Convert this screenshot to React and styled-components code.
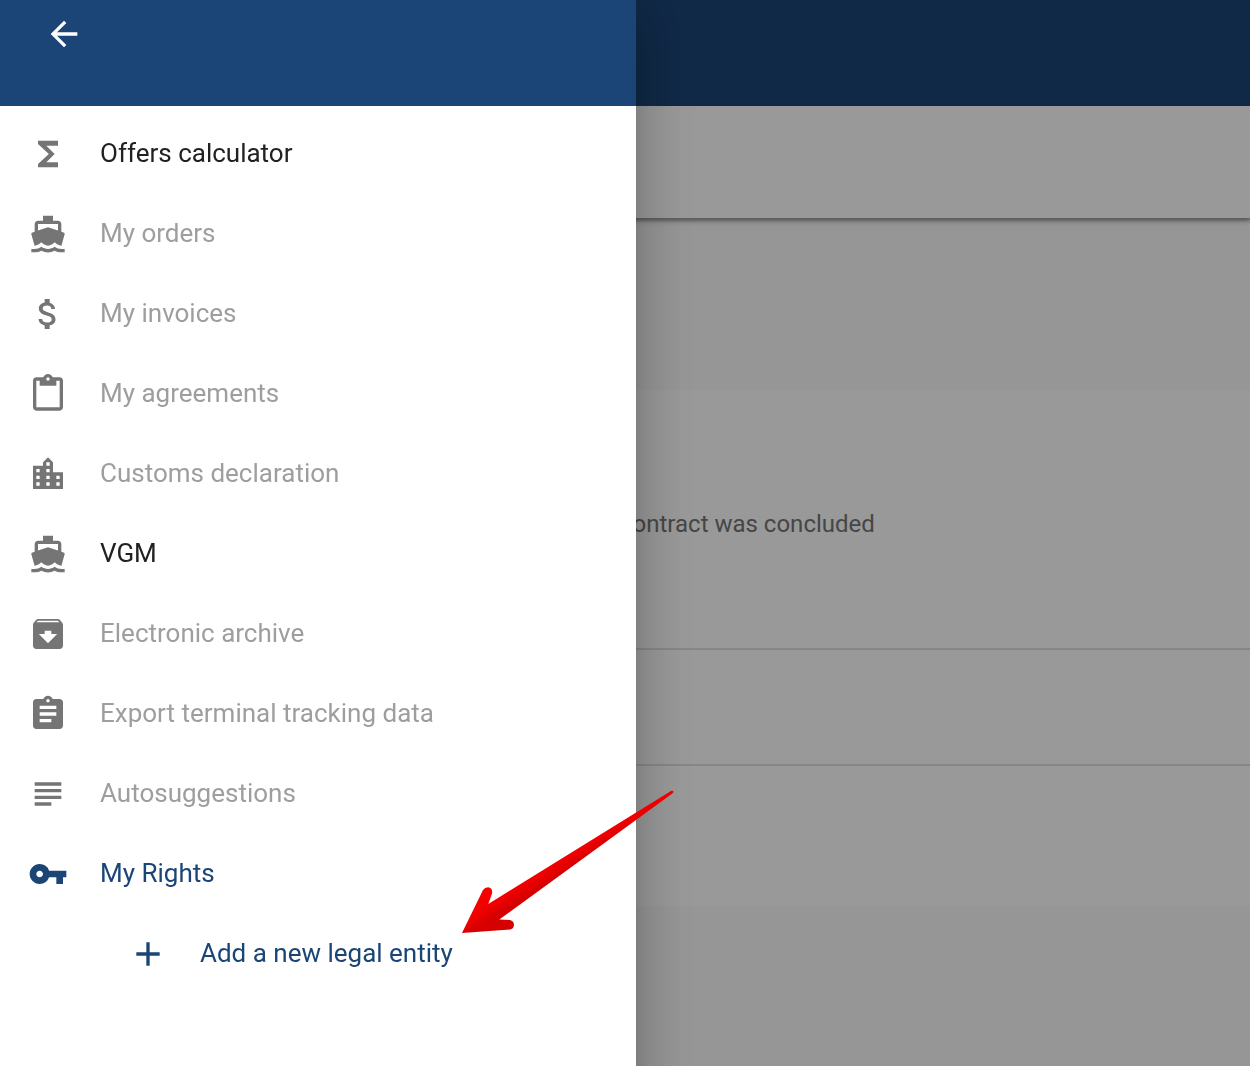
import React from "react";
import styled, { createGlobalStyle, css } from "styled-components";
import {
  MdAdd,
  MdArchive,
  MdArrowBack,
  MdAssignment,
  MdAttachMoney,
  MdContentPaste,
  MdDirectionsBoat,
  MdFunctions,
  MdLocationCity,
  MdSubject,
  MdVpnKey,
} from "react-icons/md";

const colors = {
  primary: "#1b4576",
  text: "#212121",
  disabled: "#9e9e9e",
  icon: "#757575",
  line: "#e0e0e0",
  page: "#fafafa",
};

const GlobalStyle = createGlobalStyle`
  *, *::before, *::after { box-sizing: border-box; }
  body {
    margin: 0;
    background: ${colors.page};
    font-family: Roboto, "Liberation Sans", sans-serif;
    overflow: hidden;
  }
`;

const Page = styled.div`
  display: flex;
  flex-direction: column;
  min-height: 100vh;
`;

const AppBar = styled.header`
  height: 106px;
  background: ${colors.primary};
`;

const Toolbar = styled.div`
  height: 112px;
  background: #fff;
  box-shadow:
    0 3px 2px 0 rgba(0, 0, 0, 0.2),
    0 4px 4px 0 rgba(0, 0, 0, 0.14),
    0 2px 10px 0 rgba(0, 0, 0, 0.12);
  clip-path: inset(0 0 -20px 0);
`;

const Content = styled.main`
  padding-top: 172px;
`;

const Card = styled.section`
  background: #fff;
`;

const CardRow = styled.div`
  height: ${({ $height }) => $height}px;
  border-bottom: ${({ $last }) => ($last ? "0" : `2px solid ${colors.line}`)};
`;

const Note = styled.p`
  margin: 0;
  padding: 118px 0 0 620px;
  color: ${colors.icon};
  font-size: 24px;
  line-height: 32px;
`;

const Scrim = styled.div`
  position: fixed;
  inset: 0;
  background: rgba(0, 0, 0, 0.4);
`;

const Drawer = styled.aside`
  position: fixed;
  inset: 0 auto -64px 0;
  width: 636px;
  max-width: 100%;
  background: #fff;
  box-shadow:
    0 16px 20px -10px rgba(0, 0, 0, 0.2),
    0 16px 48px 4px rgba(0, 0, 0, 0.14),
    0 6px 60px 10px rgba(0, 0, 0, 0.12);
`;

const DrawerHeader = styled.div`
  height: 106px;
  padding: 14px 44px;
  background: ${colors.primary};
`;

const BackButton = styled.button`
  display: flex;
  padding: 0;
  border: 0;
  background: none;
  color: #fff;
  font-size: 40px;
  cursor: pointer;
`;

const Menu = styled.ul`
  margin: 0;
  padding: 8px 0;
  list-style: none;
`;

const tones = {
  normal: css`
    color: ${colors.text};
    svg { color: ${colors.icon}; }
  `,
  disabled: css`
    color: ${colors.disabled};
    cursor: default;
    svg { color: ${colors.icon}; }
  `,
  active: css`
    color: ${colors.primary};
  `,
};

const MenuLink = styled.a`
  display: flex;
  align-items: center;
  gap: 32px;
  height: 80px;
  padding-left: ${({ $nested }) => ($nested ? 128 : 28)}px;
  font-size: 26px;
  line-height: 32px;
  text-decoration: none;
  ${({ $tone }) => tones[$tone]}

  svg {
    flex: none;
    font-size: 40px;
  }
`;

const Label = styled.span`
  padding-bottom: 2px;
`;

const Pointer = styled.svg`
  position: fixed;
  left: 460px;
  top: 788px;
  width: 216px;
  height: 148px;
  pointer-events: none;
`;

const items = [
  { label: "Offers calculator", icon: MdFunctions, tone: "normal" },
  { label: "My orders", icon: MdDirectionsBoat, tone: "disabled" },
  { label: "My invoices", icon: MdAttachMoney, tone: "disabled" },
  { label: "My agreements", icon: MdContentPaste, tone: "disabled" },
  { label: "Customs declaration", icon: MdLocationCity, tone: "disabled" },
  { label: "VGM", icon: MdDirectionsBoat, tone: "normal" },
  { label: "Electronic archive", icon: MdArchive, tone: "disabled" },
  { label: "Export terminal tracking data", icon: MdAssignment, tone: "disabled" },
  { label: "Autosuggestions", icon: MdSubject, tone: "disabled" },
  { label: "My Rights", icon: MdVpnKey, tone: "active" },
  { label: "Add a new legal entity", icon: MdAdd, tone: "active", nested: true },
];

function MenuItem({ label, icon: Icon, tone, nested }) {
  return (
    <li>
      <MenuLink href="#" $tone={tone} $nested={nested} aria-disabled={tone === "disabled"}>
        <Icon aria-hidden="true" />
        <Label>{label}</Label>
      </MenuLink>
    </li>
  );
}

export default function App() {
  return (
    <>
      <GlobalStyle />
      <Page>
        <AppBar />
        <Toolbar />
        <Content>
          <Card>
            <CardRow $height={260}>
              <Note>contract was concluded</Note>
            </CardRow>
            <CardRow $height={116} />
            <CardRow $height={140} $last />
          </Card>
        </Content>
      </Page>
      <Scrim />
      <Drawer>
        <DrawerHeader>
          <BackButton type="button" aria-label="Back">
            <MdArrowBack aria-hidden="true" />
          </BackButton>
        </DrawerHeader>
        <nav>
          <Menu>
            {items.map((item) => (
              <MenuItem key={item.label} {...item} />
            ))}
          </Menu>
        </nav>
      </Drawer>
      <Pointer viewBox="460 788 216 148" aria-hidden="true">
        <defs>
          <linearGradient id="pointer-red" gradientUnits="userSpaceOnUse" x1="532" y1="868" x2="546" y2="890">
            <stop offset="0" stopColor="#f60000" />
            <stop offset="0.4" stopColor="#f00000" />
            <stop offset="0.75" stopColor="#d80000" />
            <stop offset="1" stopColor="#d60000" />
          </linearGradient>
        </defs>
        <path
          fill="url(#pointer-red)"
          d="M462 933 L483 890 Q485 887.300 488 887.300 Q492.500 888 492.200 893 L488.300 904 L671.300 790.800 Q673.300 790.300 673.500 791.800 Q673.500 793 672 793.800 L499.300 919.500 L510 920 Q514 921 514 925 Q513.500 929 510 929.500 Z"
        />
      </Pointer>
    </>
  );
}
